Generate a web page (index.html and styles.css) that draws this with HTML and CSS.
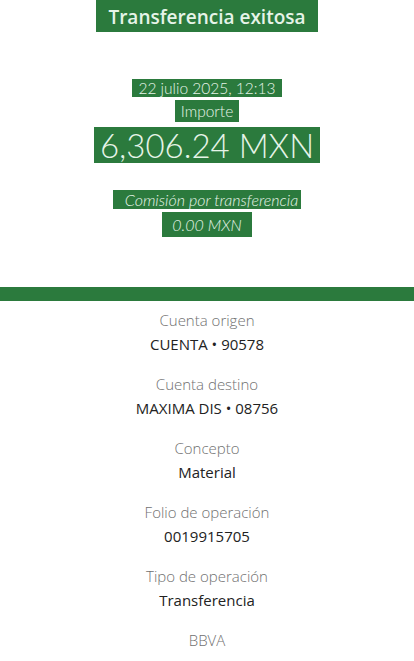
FILE: index.html
```html
<!DOCTYPE html>
<html lang="es">

<head>
  <meta charset="UTF-8">
  <meta name="viewport" content="width=device-width, initial-scale=1.0">
  <title>Transferencia exitosa</title>
  <link rel="stylesheet" href="styles.css">
</head>

<body>
  <header class="summary">
    <h1 class="title"><span class="mark">Transferencia exitosa</span></h1>
    <p class="date"><span class="mark">22 julio 2025, 12:13</span></p>
    <p class="label"><span class="mark">Importe</span></p>
    <p class="amount"><span class="mark">6,306.24 MXN</span></p>
    <p class="fee"><span class="mark">Comisión por transferencia</span></p>
    <p class="fee fee-value"><span class="mark">0.00 MXN</span></p>
  </header>

  <div class="band"></div>

  <section class="details">
    <div class="row">
      <p class="row-label">Cuenta origen</p>
      <p class="row-value">CUENTA • 90578</p>
    </div>
    <div class="row">
      <p class="row-label">Cuenta destino</p>
      <p class="row-value">MAXIMA DIS • 08756</p>
    </div>
    <div class="row">
      <p class="row-label">Concepto</p>
      <p class="row-value">Material</p>
    </div>
    <div class="row">
      <p class="row-label">Folio de operación</p>
      <p class="row-value">0019915705</p>
    </div>
    <div class="row">
      <p class="row-label">Tipo de operación</p>
      <p class="row-value">Transferencia</p>
    </div>
    <div class="row">
      <p class="row-label">BBVA</p>
    </div>
  </section>
</body>

</html>
```

FILE: styles.css
```css
body {
  margin: 0;
  font-family: Lato, "Open Sans", sans-serif;
  background-color: #fff;
  color: #222;
}

p,
h1 {
  margin: 0;
}

.summary {
  height: 287px;
  text-align: center;
}

.mark {
  display: inline-block;
  background-color: #2b7a3d;
  color: #e6f4e8;
  padding: 0 6px;
}

.title {
  font-family: "Open Sans", sans-serif;
  font-size: 19px;
  font-weight: 600;
  line-height: 24px;
}

.title .mark {
  padding: 5px 12px 3px;
}

.date {
  margin-top: 47px;
  font-size: 15.5px;
  font-weight: 300;
  line-height: 18px;
}

.label {
  margin-top: 3px;
  font-size: 15.5px;
  font-weight: 300;
  line-height: 22px;
}

.amount {
  margin-top: 5px;
  font-size: 33px;
  font-weight: 300;
  line-height: 36px;
}

.fee {
  margin-top: 27px;
  font-size: 16px;
  font-weight: 300;
  font-style: italic;
  line-height: 19px;
}

.fee .mark {
  padding: 0 3px 0 12px;
}

.fee-value {
  margin-top: 3px;
}

.fee-value .mark {
  padding: 3px 10px;
}

.band {
  height: 14px;
  background-color: #2b7a3d;
}

.details {
  padding-top: 7px;
  text-align: center;
  font-family: "Open Sans", sans-serif;
}

.row {
  margin-bottom: 16px;
}

.row-label {
  color: #707070;
  font-size: 15px;
  font-weight: 300;
  line-height: 24px;
}

.row-value {
  color: #222;
  font-size: 15px;
  font-weight: 400;
  line-height: 24px;
}
```
